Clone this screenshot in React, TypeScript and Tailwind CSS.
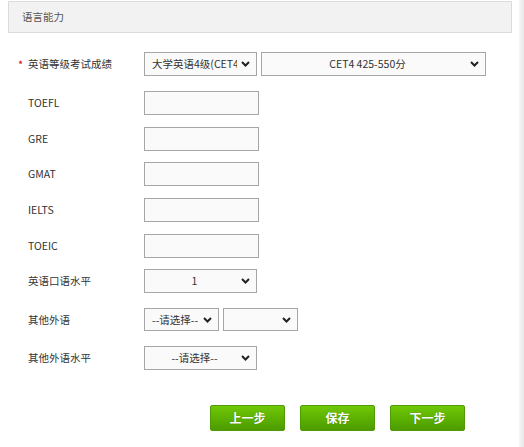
import type { ReactNode } from "react";

const font = { fontFamily: '"Noto Sans CJK SC", "Noto Sans", sans-serif' };

function Chevron() {
  return (
    <svg width="9" height="6" viewBox="0 0 9 6" className="shrink-0">
      <polyline points="1,1 4.5,4.5 8,1" fill="none" stroke="#222" strokeWidth="2" />
    </svg>
  );
}

function Select({
  width,
  height = "h-[24px]",
  center,
  children,
}: {
  width: string;
  height?: string;
  center?: boolean;
  children?: ReactNode;
}) {
  return (
    <div
      className={`${width} ${height} flex items-center border border-[#a6a6a6] bg-[#fafafa] pl-[7px] pr-[6px] text-[10.5px] text-[#333]`}
    >
      <span
        className={`flex-1 overflow-hidden whitespace-nowrap ${center ? "text-center" : ""}`}
      >
        {children}
      </span>
      <span className="ml-[4px]">
        <Chevron />
      </span>
    </div>
  );
}

function Input() {
  return <div className="w-[115px] h-[24px] border border-[#a6a6a6] bg-[#fafafa]" />;
}

function Row({
  mt,
  label,
  required,
  children,
}: {
  mt: string;
  label: string;
  required?: boolean;
  children: ReactNode;
}) {
  return (
    <div className={`${mt} flex items-center pl-[18px]`}>
      <span className="w-[10px] text-[11px] leading-none text-[#d00000]">
        {required ? "*" : ""}
      </span>
      <span className="w-[116px] text-[10.5px] text-[#333]">{label}</span>
      <div className="flex gap-[4px]">{children}</div>
    </div>
  );
}

function GreenButton({ children }: { children: ReactNode }) {
  return (
    <button className="w-[75px] h-[26px] rounded-[2px] border border-[#4f9a05] bg-gradient-to-b from-[#6fc805] to-[#4c9c00] text-[12px] font-bold text-white [text-shadow:0_0_1px_rgba(0,0,0,0.3)]">
      {children}
    </button>
  );
}

export default function App() {
  return (
    <div className="flex w-[524px] h-[447px] bg-white overflow-hidden" style={font}>
      <div className="w-[519px]">
        {/* Header */}
        <div className="ml-[8px] mt-[1px] w-[504px] h-[32px] flex items-center border border-[#dcdcdc] bg-[#f2f2f2] pl-[13px] text-[10.5px] text-[#555]">
          语言能力
        </div>

        {/* Form */}
        <Row mt="mt-[19px]" label="英语等级考试成绩" required>
          <Select width="w-[113px]">大学英语4级(CET4)</Select>
          <Select width="w-[225px]" center>
            CET4 425-550分
          </Select>
        </Row>
        <Row mt="mt-[15px]" label="TOEFL">
          <Input />
        </Row>
        <Row mt="mt-[12px]" label="GRE">
          <Input />
        </Row>
        <Row mt="mt-[11px]" label="GMAT">
          <Input />
        </Row>
        <Row mt="mt-[12px]" label="IELTS">
          <Input />
        </Row>
        <Row mt="mt-[12px]" label="TOEIC">
          <Input />
        </Row>
        <Row mt="mt-[11px]" label="英语口语水平">
          <Select width="w-[113px]" center>
            1
          </Select>
        </Row>
        <Row mt="mt-[15px]" label="其他外语">
          <Select width="w-[75px]" height="h-[23px]">
            --请选择--
          </Select>
          <Select width="w-[75px]" height="h-[23px]" />
        </Row>
        <Row mt="mt-[15px]" label="其他外语水平">
          <Select width="w-[113px]" center>
            --请选择--
          </Select>
        </Row>

        {/* Actions */}
        <div className="mt-[35px] flex gap-[15px] pl-[210px]">
          <GreenButton>上一步</GreenButton>
          <GreenButton>保存</GreenButton>
          <GreenButton>下一步</GreenButton>
        </div>
      </div>
      <div className="w-[5px] h-full bg-gradient-to-r from-[#f6f6f6] to-[#e8e8e8]" />
    </div>
  );
}
